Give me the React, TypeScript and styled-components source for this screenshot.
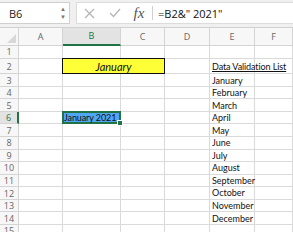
import styled, { createGlobalStyle } from 'styled-components';

const GlobalStyle = createGlobalStyle`
  html, body {
    margin: 0;
    padding: 0;
    background: #ffffff;
    overflow: hidden;
  }
  body {
    font-family: Lato, "Open Sans", "Liberation Sans", sans-serif;
  }
`;

const Page = styled.div`
  width: 293px;
  height: 232px;
  overflow: hidden;
  display: flex;
  flex-direction: column;
  background: #ffffff;
`;

const FormulaBar = styled.div`
  height: 28px;
  flex-shrink: 0;
  box-sizing: border-box;
  display: flex;
  align-items: center;
  gap: 6px;
  padding: 2px 0 3px 0;
  background: #f0f0f0;
  border-bottom: 1px solid #d0d0d0;
`;

const NameBox = styled.div`
  width: 70px;
  height: 100%;
  box-sizing: border-box;
  display: flex;
  align-items: center;
  justify-content: space-between;
  padding: 0 3px 0 9px;
  background: #ffffff;
  border: 1px solid #cfcfcf;
  border-left: none;
  font-family: "Open Sans", "Liberation Sans", sans-serif;
  font-size: 11px;
  color: #222;
`;

const Spinner = styled.div`
  display: flex;
  flex-direction: column;
  align-items: center;
  gap: 3px;
  font-size: 6px;
  line-height: 5px;
  color: #777;
`;

const FormulaArea = styled.div`
  flex: 1;
  height: 100%;
  display: flex;
  align-items: center;
  background: #ffffff;
  border: 1px solid #dcdcdc;
  border-right: none;
  box-sizing: border-box;
  padding-left: 0;
`;

const IconSlot = styled.div`
  width: 25px;
  display: flex;
  justify-content: center;
  align-items: center;
`;

const Fx = styled.span`
  width: 24px;
  text-align: center;
  font-family: "Liberation Serif", serif;
  font-style: italic;
  font-size: 15px;
  color: #555;
`;

const Divider = styled.div`
  width: 1px;
  height: 14px;
  background: #d0d0d0;
  margin: 0 5px 0 1px;
`;

const FormulaText = styled.span`
  font-family: "Open Sans", "Liberation Sans", sans-serif;
  font-size: 11px;
  color: #111;
  white-space: nowrap;
`;

const Sheet = styled.div`
  flex-shrink: 0;
  display: grid;
  grid-template-columns: 19px 44px 58px 44px 45px 45px 38px;
  grid-template-rows: 17.5px 13.5px 15.3px repeat(13, 12.55px);
`;

const ColHead = styled.div<{ $active?: boolean }>`
  box-sizing: border-box;
  display: flex;
  align-items: center;
  justify-content: center;
  font-family: "Open Sans", "Liberation Sans", sans-serif;
  font-size: 9px;
  color: ${(p) => (p.$active ? '#217346' : '#666')};
  background: ${(p) => (p.$active ? '#e3e3e3' : '#f7f7f7')};
  border-right: 1px solid #d4d4d4;
  border-bottom: ${(p) => (p.$active ? '2px solid #217346' : '1px solid #d4d4d4')};
`;

const Corner = styled.div`
  box-sizing: border-box;
  background: #f7f7f7;
  border-right: 1px solid #d4d4d4;
  border-bottom: 1px solid #d4d4d4;
  position: relative;
  &::after {
    content: '';
    position: absolute;
    right: 2px;
    bottom: 2px;
    border-left: 9px solid transparent;
    border-bottom: 9px solid #d8d8d8;
  }
`;

const RowHead = styled.div<{ $active?: boolean }>`
  box-sizing: border-box;
  display: flex;
  align-items: center;
  justify-content: center;
  font-family: "Open Sans", "Liberation Sans", sans-serif;
  font-size: 9px;
  color: ${(p) => (p.$active ? '#217346' : '#666')};
  background: ${(p) => (p.$active ? '#e3e3e3' : '#f7f7f7')};
  border-right: ${(p) => (p.$active ? '2px solid #217346' : '1px solid #d4d4d4')};
  border-bottom: 1px solid #d4d4d4;
`;

const Cell = styled.div`
  box-sizing: border-box;
  border-right: 1px solid #dadada;
  border-bottom: 1px solid #dadada;
  font-size: 9px;
  color: #111;
  white-space: nowrap;
  display: flex;
  align-items: center;
  padding-left: 2px;
  overflow: visible;
  position: relative;
  z-index: 1;
`;

const Merged = styled.div`
  grid-column: span 2;
  box-sizing: border-box;
  margin: -1px 0 0 -1px;
  background: #ffff38;
  border: 1px solid #111;
  display: flex;
  align-items: center;
  justify-content: center;
  font-size: 11px;
  font-style: italic;
  color: #111;
  position: relative;
  z-index: 2;
`;

const ListTitle = styled.span`
  text-decoration: underline;
  letter-spacing: -0.1px;
`;

const Selected = styled.div`
  box-sizing: border-box;
  margin: -1px 0 0 -1px;
  border: 2px solid #217346;
  display: flex;
  align-items: center;
  position: relative;
  z-index: 3;
`;

const Highlight = styled.span`
  flex: 1;
  height: 100%;
  display: flex;
  align-items: center;
  padding-left: 0;
  background: #4fa6f2;
  font-size: 9px;
  letter-spacing: -0.1px;
  color: #111;
  white-space: nowrap;
`;

const Handle = styled.div`
  position: absolute;
  right: -4px;
  bottom: -4px;
  width: 4px;
  height: 4px;
  background: #217346;
  border: 1px solid #ffffff;
`;

const cols = ['A', 'B', 'C', 'D', 'E', 'F'];
const months = [
  'January',
  'February',
  'March',
  'April',
  'May',
  'June',
  'July',
  'August',
  'September',
  'October',
  'November',
  'December',
];

function XIcon() {
  return (
    <svg width="11" height="11" viewBox="0 0 11 11">
      <path d="M1 1 L10 10 M10 1 L1 10" stroke="#b5b5b5" strokeWidth="1.3" fill="none" />
    </svg>
  );
}

function CheckIcon() {
  return (
    <svg width="12" height="10" viewBox="0 0 12 10">
      <path d="M1 5 L4.5 8.5 L11 1" stroke="#b5b5b5" strokeWidth="1.3" fill="none" />
    </svg>
  );
}

function renderRow(r: number) {
  const cells = [];
  cells.push(
    <RowHead key={`h${r}`} $active={r === 6}>
      {r}
    </RowHead>
  );
  for (let c = 0; c < cols.length; c++) {
    const key = `${cols[c]}${r}`;
    if (r === 2 && c === 1) {
      cells.push(<Merged key={key}>January</Merged>);
      continue;
    }
    if (r === 2 && c === 2) continue;
    if (r === 6 && c === 1) {
      cells.push(
        <Selected key={key}>
          <Highlight>January 2021</Highlight>
          <Handle />
        </Selected>
      );
      continue;
    }
    let content: React.ReactNode = null;
    if (c === 4 && r === 2) content = <ListTitle>Data Validation List</ListTitle>;
    if (c === 4 && r >= 3 && r <= 14) content = months[r - 3];
    cells.push(<Cell key={key}>{content}</Cell>);
  }
  return cells;
}

export default function App() {
  const rows = Array.from({ length: 15 }, (_, i) => i + 1);
  return (
    <Page>
      <GlobalStyle />
      <FormulaBar>
        <NameBox>
          B6
          <Spinner>
            <span>▲</span>
            <span>▼</span>
          </Spinner>
        </NameBox>
        <FormulaArea>
          <IconSlot>
            <XIcon />
          </IconSlot>
          <IconSlot>
            <CheckIcon />
          </IconSlot>
          <Fx>fx</Fx>
          <Divider />
          <FormulaText>=B2&amp;" 2021"</FormulaText>
        </FormulaArea>
      </FormulaBar>
      <Sheet>
        <Corner />
        {cols.map((c) => (
          <ColHead key={c} $active={c === 'B'}>
            {c}
          </ColHead>
        ))}
        {rows.map((r) => renderRow(r))}
      </Sheet>
    </Page>
  );
}
